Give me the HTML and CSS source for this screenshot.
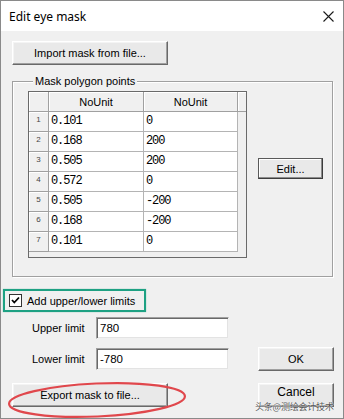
FILE: index.html
```html
<!DOCTYPE html>
<html>
<head>
<meta charset="utf-8">
<link rel="stylesheet" href="styles.css">
</head>
<body>
<div class="window">
  <div class="titlebar">
    <span class="title">Edit eye mask</span>
    <svg class="close" width="11" height="11" viewBox="0 0 11 11"><path d="M0.5 0.5 L10.5 10.5 M10.5 0.5 L0.5 10.5" stroke="#1a1a1a" stroke-width="1.1" fill="none"/></svg>
  </div>
  <div class="content">
    <button class="btn btn-import">Import mask from file...</button>
    <div class="group">
      <div class="group-head"><span class="group-title">Mask polygon points</span></div>
      <div class="group-body">
        <div class="grid-wrap">
          <div class="grid">
            <div class="hc"></div><div class="hc">NoUnit</div><div class="hc">NoUnit</div><div class="hc hf"></div>
            <div class="rh">1</div><div class="c">0.101</div><div class="c">0</div><div class="f"></div>
            <div class="rh">2</div><div class="c">0.168</div><div class="c">200</div><div class="f"></div>
            <div class="rh">3</div><div class="c">0.505</div><div class="c">200</div><div class="f"></div>
            <div class="rh">4</div><div class="c">0.572</div><div class="c">0</div><div class="f"></div>
            <div class="rh">5</div><div class="c">0.505</div><div class="c">-200</div><div class="f"></div>
            <div class="rh">6</div><div class="c">0.168</div><div class="c">-200</div><div class="f"></div>
            <div class="rh">7</div><div class="c">0.101</div><div class="c">0</div><div class="f"></div>
          </div>
        </div>
        <button class="btn btn-edit">Edit...</button>
      </div>
    </div>
    <div class="check-row">
      <span class="checkbox"><svg width="11" height="11" viewBox="0 0 11 11"><path d="M2 5 L4.3 7.5 L9 2.5" stroke="#000" stroke-width="1.8" fill="none"/></svg></span>
      <span class="check-label">Add upper/lower limits</span>
    </div>
    <div class="field-row">
      <span class="field-label">Upper limit</span>
      <div class="input">780</div>
    </div>
    <div class="field-row row-lower">
      <span class="field-label">Lower limit</span>
      <div class="input">-780</div>
      <button class="btn btn-ok">OK</button>
    </div>
    <div class="bottom-row">
      <button class="btn btn-export">Export mask to file...</button>
      <button class="btn btn-cancel">Cancel</button>
    </div>
  </div>
  <svg class="ellipse" width="344" height="419" viewBox="0 0 344 419"><ellipse cx="97" cy="400" rx="88" ry="16.5" transform="rotate(-2.5 97 400)" fill="none" stroke="#e0474c" stroke-width="2.2"/></svg>
  <span class="watermark">头条@测绘会计技术</span>
</div>
</body>
</html>
```
FILE: styles.css
```css
* { box-sizing: border-box; }
html, body { margin: 0; padding: 0; }
body { width: 344px; height: 419px; overflow: hidden; background: #f0f0f0; font-family: "Liberation Sans", Arial, sans-serif; font-size: 11px; color: #000; }
.window { position: relative; width: 344px; height: 419px; border: 1px solid #8a8a8a; background: #f0f0f0; }
.titlebar { height: 30px; background: #fff; display: flex; align-items: center; justify-content: space-between; padding: 0 9px 0 8px; }
.title { font-family: "Noto Sans", "Open Sans", sans-serif; font-size: 12px; color: #000; }
.close { display: block; }
.content { padding: 10px 9px 0 11px; display: flex; flex-direction: column; align-items: flex-start; }
.btn { font-family: "Liberation Sans", Arial, sans-serif; font-size: 11px; color: #000; background: #e9e9e9; padding: 0; margin: 0; border: 1px solid; border-color: #ffffff #696969 #696969 #ffffff; box-shadow: inset -1px -1px 0 #a0a0a0, inset 1px 1px 0 #f4f4f4; display: flex; align-items: center; justify-content: center; }
.btn-import { width: 156px; height: 24px; }
.group { margin-top: 16px; width: 321px; height: 196px; border: 1px solid #a0a0a0; box-shadow: 1px 1px 0 #fff, inset 1px 1px 0 #fff; padding-left: 15px; }
.group-head { height: 13px; margin-top: -7px; line-height: 13px; }
.group-title { display: inline-block; margin-left: 5px; padding: 0 2px; background: #f0f0f0; }
.group-body { margin-top: 3px; display: flex; align-items: flex-start; }
.grid-wrap { width: 219px; height: 167px; border: 1px solid #6a6a6a; background: #f0f0f0; }
.grid { display: grid; grid-template-columns: 20px 95px 94px 8px; grid-auto-rows: 20px; }
.hc { background: #f0f0f0; border-right: 1px solid #a0a0a0; border-bottom: 1px solid #a0a0a0; box-shadow: inset 1px 1px 0 #fff; display: flex; align-items: center; justify-content: center; }
.hc.hf { border-right: none; }
.rh { background: #f0f0f0; border-right: 1px solid #a0a0a0; border-bottom: 1px solid #a0a0a0; box-shadow: inset 1px 1px 0 #fff; font-size: 8px; color: #444; text-align: center; line-height: 12px; padding-top: 2px; }
.c { background: #fff; border-right: 1px solid #b4b4b4; border-bottom: 1px solid #b4b4b4; font-family: "Liberation Mono", monospace; font-size: 12px; letter-spacing: -1.1px; line-height: 19px; padding-left: 2px; }
.f { background: transparent; }
.btn-edit { width: 65px; height: 21px; margin-top: 67px; margin-left: 11px; border-color: #5a5a5a #3c3c3c #3c3c3c #5a5a5a; box-shadow: inset -1px -1px 0 #8c8c8c, inset 1px 1px 0 #fff; }
.check-row { margin: 12px 0 0 -9px; width: 143px; height: 23px; border: 2px solid #1ea183; box-shadow: 0 0 1px rgba(30,161,131,0.6); display: flex; align-items: center; padding-left: 4px; }
.checkbox { width: 13px; height: 13px; background: #fff; border: 1px solid #333; display: flex; align-items: center; justify-content: center; margin-right: 5px; }
.checkbox svg { display: block; }
.field-row { display: flex; align-items: center; padding-left: 20px; margin-top: 5px; width: 100%; }
.row-lower { margin-top: 8px; height: 24px; }
.field-label { width: 64px; }
.input { width: 133px; height: 22px; background: #fff; border: 1px solid; border-color: #a0a0a0 #f0f0f0 #f0f0f0 #a0a0a0; box-shadow: inset 1px 1px 0 #696969, inset -1px -1px 0 #e3e3e3; padding: 3px 3px 0; line-height: 14px; font-size: 11.5px; }
.btn-ok { width: 76px; height: 24px; margin-left: auto; }
.bottom-row { display: flex; width: 100%; margin-top: 12px; }
.btn-export { width: 156px; height: 24px; }
.btn-cancel { width: 76px; height: 24px; margin-left: auto; font-size: 12px; padding-bottom: 5px; line-height: 13px; }
.ellipse { position: absolute; left: -1px; top: -1px; pointer-events: none; }
.watermark { position: absolute; left: 254px; top: 401px; font-family: "Noto Sans CJK SC", sans-serif; font-size: 9px; line-height: 10px; color: #555; text-shadow: 0 0 1px #fff, 0 0 1px #fff; letter-spacing: -0.2px; }
```
